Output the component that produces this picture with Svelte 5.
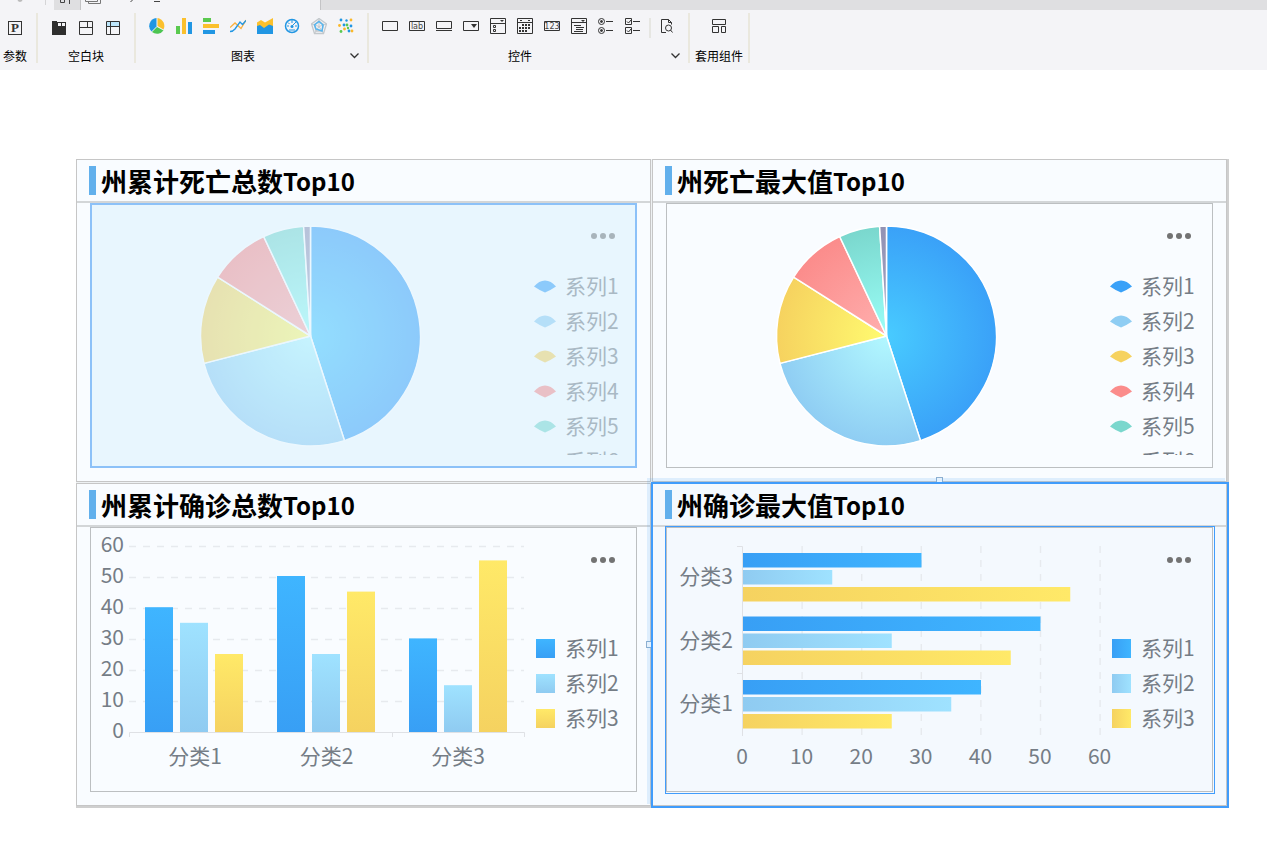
<script lang="ts">
	type Kind = 'pie' | 'column' | 'bar';

	interface Panel {
		title: string;
		kind: Kind;
		faded?: boolean;
		selected?: boolean;
	}

	const panels: Panel[] = [
		{ title: '州累计死亡总数', kind: 'pie', faded: true },
		{ title: '州死亡最大值', kind: 'pie' },
		{ title: '州累计确诊总数', kind: 'column' },
		{ title: '州确诊最大值', kind: 'bar', selected: true }
	];

	const pieColors = ['#3aa1f8', '#8fcdf3', '#f6d25f', '#fb8c8b', '#7ad7cd', '#9292b4'];
	const pieInner = ['#48cbff', '#b2f8ff', '#fffb70', '#ffafae', '#9bfff8', '#a5a5c4'];
	const shares = [45, 26, 13, 9, 6, 1];
	const cx = 219.5;
	const cy = 132;
	const radius = 110;

	const categories = [
		{ name: '分类1', values: [40, 35, 25] },
		{ name: '分类2', values: [50, 25, 45] },
		{ name: '分类3', values: [30, 15, 55] }
	];
	const reversed = [...categories].reverse();
	const ticks = [0, 10, 20, 30, 40, 50, 60];

	function point(share: number) {
		const a = (share / 100) * Math.PI * 2;
		return `${cx + radius * Math.sin(a)} ${cy - radius * Math.cos(a)}`;
	}

	function slice(i: number) {
		const start = shares.slice(0, i).reduce((a, b) => a + b, 0);
		const end = start + shares[i];
		return `M${cx} ${cy}L${point(start)}A${radius} ${radius} 0 0 1 ${point(end)}Z`;
	}

	const blanks = ['空白块 1', '空白块 2', '空白块 3'];
	const charts = ['饼图', '柱形图', '条形图', '折线图', '面积图', '仪表盘', '雷达图', '散点图'];
	const controls = ['文本', '标签', '按钮', '下拉框', '下拉复选框', '日期', '数字', '下拉树', '单选按钮组', '复选框组'];
</script>

{#snippet icon(name: string)}
	<svg class="icon" width="16" height="18" viewBox="0 0 16 18" fill="none" stroke="#333" aria-hidden="true">
		{#if name === '参数'}
			<rect x="1.5" y="3.5" width="13" height="13" />
			<text x="8" y="14" class="letter">P</text>
		{:else if name === '空白块 1'}
			<path fill="#2e2e2e" stroke="none" d="M1 3h5v1h9v13H1z" />
			<path fill="#f4f4f7" stroke="none" d="M7 5h3v3H7zM11 5h3v3h-3z" />
		{:else if name === '空白块 2'}
			<path d="M1.5 3.5h13v13h-13zM1.5 9.5h13M9.5 3.5v6" />
		{:else if name === '空白块 3'}
			<path fill="#bde6fb" stroke="none" d="M2 4h12v4H2z" />
			<path d="M1.5 3.5h13v13h-13zM1.5 8.5h13M5.5 3.5v13" />
		{:else if name === '饼图'}
			<g stroke="none">
				<path fill="#fbc02d" d="M8.500 8V0a8 8 0 0 1 6 11.500z" />
				<path fill="#4cc552" d="M8 9l6.500 3.500a8 8 0 0 1-11.500 1.500z" />
				<path fill="#2196e3" d="M7.500 8.500L2.500 13.500A8 8 0 0 1 7.500 0z" />
			</g>
		{:else if name === '柱形图'}
			<g stroke="none">
				<path fill="#5ac94f" d="M0 8h4v8H0z" />
				<path fill="#fbc02d" d="M6 0h4v16H6z" />
				<path fill="#2196e3" d="M12 4h4v12h-4z" />
			</g>
		{:else if name === '条形图'}
			<g stroke="none">
				<path fill="#5ac94f" d="M0 0h8v4H0z" />
				<path fill="#fbc02d" d="M0 6h16v4H0z" />
				<path fill="#2196e3" d="M0 12h12v4H0z" />
			</g>
		{:else if name === '折线图'}
			<path stroke="#fbb03b" stroke-width="1.300" d="M0 9.500l5-4.500 6 5.500 5-8.500" />
			<path stroke="#2196e3" stroke-width="1.300" d="M0 13.500q3 0 5-2.500l5-7 2.500 2.500L16 2.500" />
		{:else if name === '面积图'}
			<path fill="#fbc02d" stroke="none" d="M0 4.500l4-2.500 4 2.500 8-4.500v10H0z" />
			<path fill="#2196e3" stroke="none" d="M0 8l3-1 4 3 5-3.500 4 1.500v8H0z" />
		{:else if name === '仪表盘'}
			<circle cx="8" cy="8" r="6.500" stroke="#2196e3" stroke-width="1.500" />
			<path stroke="#2196e3" d="M8 2v3M3 8h2M11 8h2M4 4.500l1.500 1.500M7 9l5-5M5 12h6" />
			<circle cx="8" cy="8.500" r="1.500" fill="#2196e3" stroke="none" />
		{:else if name === '雷达图'}
			<path stroke="#c3c8cc" stroke-width="1.300" d="M8 .5l7.500 5.500-3 9.500h-9L.5 6zM8 3l4.500 3.500-1.500 6.500H5L3.500 6.500z" />
			<path stroke="#c3c8cc" d="M8 .5v8M.5 6l7.500 2.500L15.500 6M3.500 15.500l4.500-7 4.500 7" />
			<path stroke="#55b5ef" stroke-width="1.500" d="M8 3.500l4 3.500-1 6-6-2-1.500-4z" />
		{:else if name === '散点图'}
			<g stroke="none" fill="#2196e3">
				<circle cx="3" cy="2" r="1.400" /><circle cx="8.500" cy="2.500" r="1.200" /><circle cx="6" cy="7" r="1.400" /><circle cx="13" cy="8" r="1.400" /><circle cx="11" cy="13" r="1.400" />
			</g>
			<g stroke="none" fill="#fbb829">
				<circle cx="13" cy="2" r="1.400" /><circle cx="1.500" cy="7.500" r="1.400" /><circle cx="6.500" cy="11" r="1.400" /><circle cx="14" cy="13" r="1.400" />
			</g>
			<g stroke="none" fill="#5ac94f">
				<circle cx="9" cy="7" r="1.400" /><circle cx="3" cy="13.500" r="1.400" /><circle cx="10" cy="10" r="1.200" />
			</g>
		{:else if name === '文本'}
			<path d="M.5 3.500h15v9H.5z" />
		{:else if name === '标签'}
			<path d="M.5 3.500h15v9H.5z" />
			<text x="8" y="11" class="tiny">lab</text>
		{:else if name === '按钮'}
			<path d="M.5 3.500h15v7H.5zM0 12.500h16" />
		{:else if name === '下拉框'}
			<path d="M.5 3.500h15v9H.5z" />
			<path fill="#333" stroke="none" d="M8 6h6l-3 4z" />
		{:else if name === '下拉复选框'}
			<path d="M.5 .5h15v15H.5zM.5 5.500h15M3.500 7.500h2v2h-2zM3.500 11.500h2v2h-2z" />
			<path fill="#333" stroke="none" d="M10 2h4l-2 2z" />
		{:else if name === '日期'}
			<path d="M.5 .5h15v15H.5zM.5 4.500h15M3 2.500h2M11 2.500h2" />
			<path stroke-width="2" stroke-dasharray="2 1" d="M5 7h9M2 10h12M2 13h8" />
		{:else if name === '数字'}
			<path d="M.5 3.500h15v9H.5z" />
			<text x="8" y="11" class="tiny">123</text>
		{:else if name === '下拉树'}
			<path d="M.5 .5h15v15H.5zM.5 4.500h15M3 7.500h7M5 9.500h8M5 11.500h7M3 13.500h9" />
			<path fill="#333" stroke="none" d="M10 2h4l-2 2z" />
		{:else if name === '单选按钮组'}
			<circle cx="3.500" cy="3.500" r="3" /><circle cx="3.500" cy="12.500" r="3" />
			<circle cx="3.500" cy="3.500" r="1" fill="#333" /><circle cx="3.500" cy="12.500" r="1" fill="#333" />
			<path d="M8 3.500h7M8 12.500h7" />
		{:else if name === '复选框组'}
			<path d="M.5 .5h6v6h-6zM.5 9.500h6v6h-6zM2 3.500l1.500 1.500L6 2M2 12.500l1.500 1.500L6 11M8 3.500h7M8 12.500h7" />
		{:else if name === '查询'}
			<path d="M5 14.500H2.500V1.500h7l3 3v2M9.500 1.500v3h3" />
			<circle cx="9.500" cy="10" r="3" />
			<path d="M5 14.500h2M11.500 12l2 2.500" />
		{:else if name === '套用组件'}
			<path d="M1.500 1.500h13v5h-13zM1.500 8.500h6v6h-6zM10.500 8.500h4v6h-4z" />
		{/if}
	</svg>
{/snippet}

{#snippet tool(name: string)}
	<button type="button" class="tool" aria-label={name}>{@render icon(name)}</button>
{/snippet}

{#snippet chevron(name: string)}
	<button type="button" class="more" aria-label={name}>
		<svg width="9" height="6" viewBox="0 0 9 6" fill="none" stroke="#333" stroke-width="1.300"><path d="M.5 .5l4 4 4-4" /></svg>
	</button>
{/snippet}

<svg width="0" height="0" class="defs" aria-hidden="true">
	<defs>
		{#each pieColors as color, i}
			<radialGradient id="pie-{i}" gradientUnits="userSpaceOnUse" {cx} {cy} r={radius}>
				<stop offset="0" stop-color={pieInner[i]} />
				<stop offset="1" stop-color={color} />
			</radialGradient>
		{/each}
		{#each [['#3fb5ff', '#389ff5'], ['#9fe2ff', '#8fcbf1'], ['#ffe968', '#f5d260']] as [light, dark], i}
			<linearGradient id="column-{i}" x2="0" y2="1">
				<stop offset="0" stop-color={light} />
				<stop offset="1" stop-color={dark} />
			</linearGradient>
			<linearGradient id="bar-{i}">
				<stop offset="0" stop-color={dark} />
				<stop offset="1" stop-color={light} />
			</linearGradient>
		{/each}
	</defs>
</svg>

<header>
	<div class="tabs">
		<svg width="320" height="10" viewBox="0 0 320 10" fill="none" stroke="#444" aria-hidden="true">
			<path stroke="#bbb" stroke-width="2" d="M18 0l2 1 2-1" />
			<path stroke="#d5d5d7" d="M45.500 0v5" />
			<path fill="#dfdfe1" stroke="none" d="M54 0h27v10H54z" />
			<path stroke="#c4c4c6" d="M80.500 0v10" />
			<path d="M60.500 0v2.500h4V0M69.500 0v4" />
			<path stroke="#777" d="M85.500 0v1.500h12V0M88.500 1.500v2h12V0" />
			<path d="M132.500 0l-2 2M154 1.500h6" />
		</svg>
	</div>
	<div class="ribbon">
		<section class="group params">
			<div class="tools">{@render tool('参数')}</div>
			<div class="caption"><span>参数</span></div>
		</section>
		<section class="group blanks">
			<div class="tools">
				{#each blanks as name}{@render tool(name)}{/each}
			</div>
			<div class="caption"><span>空白块</span></div>
		</section>
		<section class="group charts">
			<div class="tools">
				{#each charts as name}{@render tool(name)}{/each}
			</div>
			<div class="caption"><span>图表</span>{@render chevron('更多图表')}</div>
		</section>
		<section class="group controls">
			<div class="tools">
				{#each controls as name}{@render tool(name)}{/each}
				<i class="split"></i>
				{@render tool('查询')}
			</div>
			<div class="caption"><span>控件</span>{@render chevron('更多控件')}</div>
		</section>
		<section class="group reuse">
			<div class="tools">{@render tool('套用组件')}</div>
			<div class="caption"><span>套用组件</span></div>
		</section>
	</div>
</header>

<main>
	<div class="board">
		{#each panels as panel}
			<article class="panel" class:selected={panel.selected}>
				<h2>{panel.title}<span>Top10</span></h2>
				<div class="chart" class:faded={panel.faded}>
					<svg class="plot" viewBox="0 0 440 263" role="img" aria-label={panel.title}>
						{#if panel.kind === 'pie'}
							{#each shares as _, i}
								<path d={slice(i)} fill="url(#pie-{i})" stroke="#fff" stroke-width="1.500" stroke-linejoin="round" />
							{/each}
						{:else if panel.kind === 'column'}
							{#each ticks as t}
								{#if t > 0}
									<path class="grid" d="M38 {204.5 - t * 3.1}H433" />
								{/if}
								<text x="33" y={210 - t * 3.1} text-anchor="end">{t}</text>
							{/each}
							{#each categories as c, i}
								{#each c.values as v, j}
									<rect x={54 + i * 132 + j * 35} y={204 - v * 3.12} width="28" height={v * 3.12} fill="url(#column-{j})" />
								{/each}
								<text x={104 + i * 131.5} y="236" text-anchor="middle">{c.name}</text>
							{/each}
							<path class="axis" d="M38.500 209v-4.500h395v4.500M301.500 204v5" />
						{:else}
							{#each ticks as t}
								{#if t > 0}
									<path class="grid" d="M{75.5 + t * 5.96} 18V208" />
								{/if}
								<text x={75 + t * 5.96} y="236" text-anchor="middle">{t}</text>
							{/each}
							{#each reversed as c, i}
								{#each c.values as v, j}
									<rect x="76" y={25 + i * 63.5 + j * 17} width={v * 5.95} height="14.500" fill="url(#bar-{j})" />
								{/each}
								<text x="66" y={56 + i * 63.5} text-anchor="end">{c.name}</text>
							{/each}
							<path class="axis" d="M70 18.500h5.500V208M70 145.500h5" />
						{/if}
					</svg>
					<aside>
						<button type="button" class="dots" aria-label="更多"><i></i><i></i><i></i></button>
						<ul class:pie={panel.kind === 'pie'}>
							{#each panel.kind === 'pie' ? shares : [1, 2, 3] as _, i}
								<li>
									<svg width="22" height="20" viewBox="0 0 22 20" aria-hidden="true">
										{#if panel.kind === 'pie'}
											<path fill={pieColors[i]} d="M0 10.500Q5 4.500 11 4.500T22 10.500Q17 14 11 16.500Q5 14 0 10.500z" />
										{:else}
											<rect x="2" y="1" width="19" height="19" fill="url(#{panel.kind}-{i})" />
										{/if}
									</svg>
									系列{i + 1}
								</li>
							{/each}
						</ul>
					</aside>
				</div>
				{#if panel.selected}
					<i class="handle top"></i>
					<i class="handle left"></i>
				{/if}
			</article>
		{/each}
	</div>
</main>

<style>
	:global(body) {
		margin: 0;
		background: #fff;
		font-family: 'Noto Sans CJK SC', sans-serif;
	}

	.defs {
		position: absolute;
	}

	button {
		padding: 0;
		border: 0;
		background: none;
	}

	header {
		background: #f4f4f7;
	}

	.tabs {
		display: flex;
		height: 10px;
	}

	.tabs::after {
		content: '';
		flex: 1;
		background: #dfdfe1;
		border-left: 1px solid #c4c4c6;
	}

	.ribbon {
		display: flex;
		height: 50px;
		padding: 3px 0 7px;
	}

	.group {
		display: flex;
		flex-direction: column;
		box-sizing: border-box;
		border-right: 2px solid #eae8de;
		padding-top: 5px;
	}

	.params {
		width: 38px;
		padding-right: 6px;
	}

	.blanks {
		width: 98px;
	}

	.charts {
		width: 233px;
	}

	.controls {
		width: 321px;
	}

	.reuse {
		width: 60px;
	}

	.tools {
		display: flex;
		justify-content: center;
		gap: 11px;
		height: 18px;
	}

	.charts .tools,
	.controls .tools {
		justify-content: flex-start;
		padding-left: 13px;
	}

	.tool {
		display: block;
		width: 16px;
		height: 18px;
	}

	.icon {
		display: block;
	}

	.split {
		width: 2px;
		height: 20px;
		margin: 0 -3px;
		background: #e6e6e2;
	}

	.caption {
		display: flex;
		align-items: center;
		height: 20px;
		margin-top: 10px;
		font-size: 12px;
		line-height: 20px;
		color: #000;
	}

	.caption span {
		flex: 1;
		text-align: center;
		white-space: nowrap;
	}

	.more {
		display: flex;
		margin-right: 8px;
	}

	.letter {
		font: bold 13px 'Liberation Serif', serif;
		fill: #333;
		stroke: none;
		text-anchor: middle;
	}

	.tiny {
		font: 8px 'DejaVu Sans', sans-serif;
		fill: #444;
		stroke: none;
		text-anchor: middle;
	}

	main {
		padding: 89px 38px 42px 76px;
	}

	.board {
		display: grid;
		grid-template-columns: 1fr 1fr;
		gap: 1px;
		border: solid #cfcfcf;
		border-width: 0 2px 2px 0;
		background: #eef1f3;
	}

	.panel {
		position: relative;
		border: 1px solid #c6c6c6;
		background: #f9fcff;
	}

	h2 {
		display: flex;
		align-items: center;
		height: 41px;
		margin: 0;
		padding-left: 12px;
		border-bottom: 2px solid #d3d6d8;
		font-size: 26px;
		line-height: 40px;
		font-weight: 700;
		color: #000;
		white-space: nowrap;
	}

	h2::before {
		content: '';
		width: 7px;
		height: 29px;
		margin-right: 5px;
		background: #62b0ec;
	}

	h2 span {
		font-size: 24px;
	}

	.chart {
		position: relative;
		display: flex;
		margin: 0 13px 13px;
		border: 1px solid #bcbfc1;
		height: 263px;
	}

	.faded::after {
		content: '';
		position: absolute;
		inset: -1px;
		border: 2px solid #8cc1f8;
		background: rgba(216, 240, 253, 0.52);
		pointer-events: none;
	}

	.plot {
		flex: 1;
		min-width: 0;
		height: 263px;
		overflow: visible;
	}

	.plot text {
		font-size: 21px;
		fill: #757d86;
	}

	.grid {
		stroke: #e7eaee;
		stroke-width: 1.4px;
		stroke-dasharray: 7 7;
	}

	.axis {
		fill: none;
		stroke: #dfe1e5;
	}

	aside {
		width: 105px;
		display: flex;
		flex-direction: column;
	}

	.dots {
		display: flex;
		gap: 3px;
		align-self: flex-end;
		margin: 29px 21px 0 0;
	}

	.dots i {
		width: 6px;
		height: 6px;
		border-radius: 50%;
		background: #737373;
	}

	ul {
		list-style: none;
		margin: 67px 0 0;
		padding: 0 0 0 3px;
	}

	.pie {
		height: 187px;
		margin-top: 29px;
		overflow: hidden;
	}

	li {
		display: flex;
		align-items: center;
		gap: 9px;
		height: 35px;
		font-size: 21px;
		line-height: 35px;
		color: #757d86;
		white-space: nowrap;
	}

	.selected,
	.selected .chart {
		background: #f4f9fe;
	}

	.selected::after {
		content: '';
		position: absolute;
		inset: -2px -3px -3px -2px;
		border: 2px solid #409cfb;
		box-shadow: -4px -4px 0 rgba(64, 154, 244, 0.14);
		pointer-events: none;
	}

	.selected .chart::after {
		content: '';
		position: absolute;
		inset: -2px -3px -3px -2px;
		border: 1px solid #409cfb;
		pointer-events: none;
	}

	.handle {
		position: absolute;
		width: 5px;
		height: 5px;
		border: 1px solid #8fb0d0;
		background: #fff;
	}

	.top {
		top: -7px;
		left: calc(50% - 4px);
		border-bottom: 0;
	}

	.left {
		left: -7px;
		top: calc(50% - 4px);
		border-right: 0;
	}
</style>
